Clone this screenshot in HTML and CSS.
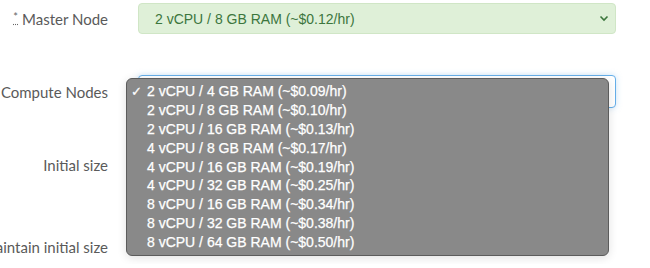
FILE: index.html
```html
<!DOCTYPE html>
<html lang="en">
<head>
  <meta charset="UTF-8">
  <meta name="viewport" content="width=device-width, initial-scale=1.0">
  <title>Cluster Size</title>
  <link rel="stylesheet" href="styles.css">
</head>
<body>
  <form class="cluster-form">
    <div class="form-row row-master">
      <label class="form-label"><abbr class="req" title="required">*</abbr> Master Node</label>
      <div class="select select-success">
        <span>2 vCPU / 8 GB RAM (~$0.12/hr)</span>
        <svg class="chevron" width="10" height="7" viewBox="0 0 10 7"><path d="M1.5 1.5 L5 5 L8.5 1.5" fill="none" stroke="#3c763d" stroke-width="1.6"/></svg>
      </div>
    </div>

    <div class="form-row row-compute">
      <label class="form-label">Compute Nodes</label>
      <div class="select select-focus">
        <svg class="chevron" width="10" height="7" viewBox="0 0 10 7"><path d="M1.5 1.5 L5 5 L8.5 1.5" fill="none" stroke="#555" stroke-width="1.6"/></svg>
      </div>

      <ul class="dropdown">
        <li class="selected">2 vCPU / 4 GB RAM (~$0.09/hr)</li>
        <li>2 vCPU / 8 GB RAM (~$0.10/hr)</li>
        <li>2 vCPU / 16 GB RAM (~$0.13/hr)</li>
        <li>4 vCPU / 8 GB RAM (~$0.17/hr)</li>
        <li>4 vCPU / 16 GB RAM (~$0.19/hr)</li>
        <li>4 vCPU / 32 GB RAM (~$0.25/hr)</li>
        <li>8 vCPU / 16 GB RAM (~$0.34/hr)</li>
        <li>8 vCPU / 32 GB RAM (~$0.38/hr)</li>
        <li>8 vCPU / 64 GB RAM (~$0.50/hr)</li>
      </ul>
    </div>

    <div class="form-row row-initial">
      <label class="form-label">Initial size</label>
      <div class="control"></div>
    </div>

    <div class="form-row row-maintain">
      <label class="form-label">Maintain initial size</label>
      <div class="control"></div>
    </div>
  </form>
</body>
</html>
```

FILE: styles.css
```css
body {
  margin: 0;
  background-color: #fff;
  font-family: Lato, "Open Sans", sans-serif;
  color: #555;
}

.cluster-form {
  padding-top: 3px;
  width: 616px;
}

.form-row {
  display: grid;
  grid-template-columns: 108px 478px;
  column-gap: 30px;
  align-items: center;
}

.row-master {
  height: 31px;
  margin-bottom: 41px;
}

.row-compute {
  position: relative;
  height: 33px;
  margin-bottom: 40px;
}

.row-initial {
  height: 34px;
  margin-bottom: 48px;
}

.row-maintain {
  height: 34px;
}

.form-label {
  display: flex;
  justify-content: flex-end;
  white-space: nowrap;
  font-size: 15px;
  color: #5a5a5a;
}

.req {
  text-decoration: underline dotted;
  text-underline-offset: 3px;
  margin-right: 4px;
  font-size: 11px;
  color: #666;
}

.select {
  box-sizing: border-box;
  height: 100%;
  display: flex;
  align-items: center;
  justify-content: space-between;
  padding: 0 6px 0 16px;
  border-radius: 4px;
  font-family: "Liberation Sans", Arial, sans-serif;
  font-size: 14px;
}

.select-success {
  background-color: #dff0d8;
  border: 1px solid #d0e6c6;
  color: #3c763d;
}

.select-focus {
  justify-content: flex-end;
  background-color: #fff;
  border: 1px solid #66afe9;
  box-shadow: 0 0 6px rgba(102, 175, 233, 0.35);
  color: #555;
}

.chevron {
  flex-shrink: 0;
}

.dropdown {
  position: absolute;
  left: 126px;
  top: 3px;
  width: 483px;
  height: 178px;
  box-sizing: border-box;
  margin: 0;
  padding: 3px 0 0;
  list-style: none;
  background-color: #898989;
  border: 1px solid #5c5c5c;
  border-radius: 6px;
  box-shadow: 0 2px 10px rgba(0, 0, 0, 0.12);
  font-family: "Liberation Sans", Arial, sans-serif;
  font-size: 14px;
  color: #fff;
}

.dropdown li {
  height: 18.9px;
  line-height: 19px;
  padding-left: 20px;
  position: relative;
  -webkit-text-stroke: 0.25px #fff;
}

.dropdown li.selected::before {
  content: "\2713";
  position: absolute;
  left: 4px;
  font-size: 13px;
}
```
